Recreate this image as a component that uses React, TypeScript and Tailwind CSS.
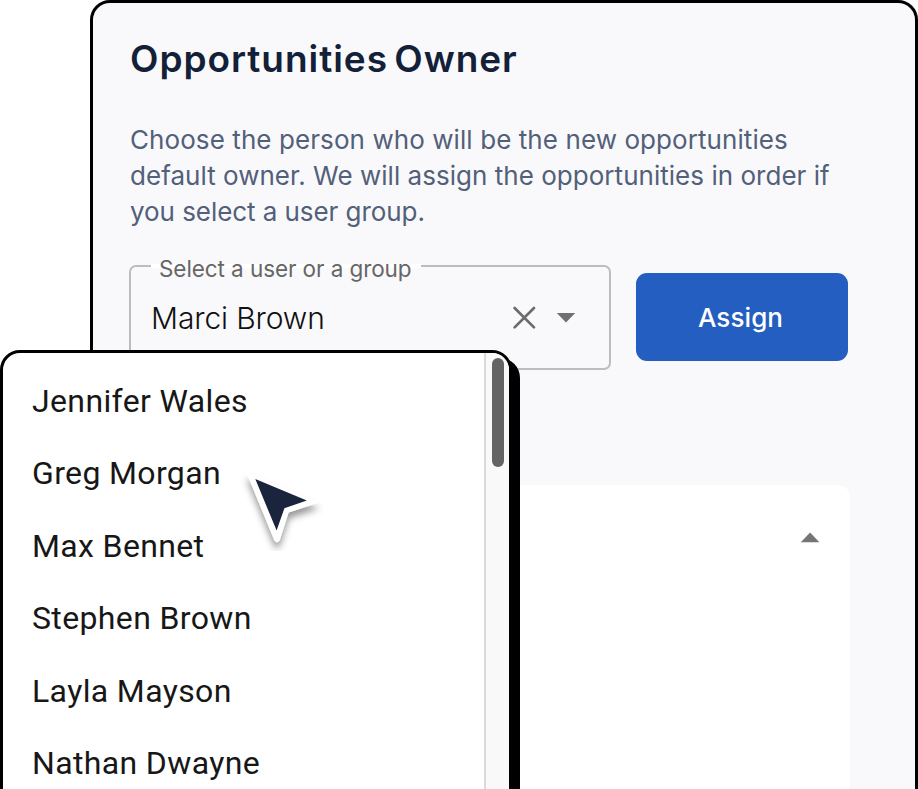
const users = [
  "Jennifer Wales",
  "Greg Morgan",
  "Max Bennet",
  "Stephen Brown",
  "Layla Mayson",
  "Nathan Dwayne",
];

function OwnerSelect() {
  return (
    <div className="relative flex h-[105px] w-[482px] items-center rounded-[7px] border-2 border-[#bdbdbf] pl-5 pr-[33px]">
      <span className="absolute -top-[3px] left-5 h-1 w-[270px] bg-white" />
      <span className="absolute -top-3 left-[28px] whitespace-nowrap text-[22.5px] leading-7 tracking-[-0.08px] text-[#666]">
        Select a user or a group
      </span>
      <span className="flex-1 text-[30px] font-light leading-10 tracking-[-0.13px] text-[#111]">
        Marci Brown
      </span>
      <svg width="24" height="24" viewBox="0 0 24 24" className="mr-5" fill="none" stroke="#6b6b6b" strokeWidth="2.7" strokeLinecap="round">
        <path d="M2.6 2 22 21.4M22 2 2.6 21.4" />
      </svg>
      <svg width="20" height="10" viewBox="0 0 20 10" fill="#707070">
        <path d="M.8 0h18.4L10 9.4z" />
      </svg>
    </div>
  );
}

function OwnerPanel() {
  return (
    <section className="ml-[90px] flex h-[840px] w-[828px] flex-col rounded-[20px] border-[3px] border-black bg-[#f9f9fc] pl-9 pr-[67px] pt-8">
      <h1 className="ml-px whitespace-nowrap text-[37px] font-semibold leading-[48px] tracking-[0.96px] [word-spacing:-4px] text-[#141f38]">
        Opportunities Owner
      </h1>
      <p className="ml-px mt-[39px] whitespace-nowrap text-[26px] leading-[35.75px] text-[#526079]">
        <span className="block tracking-[0.08px]">Choose the person who will be the new opportunities</span>
        <span className="block tracking-[0.03px]">default owner. We will assign the opportunities in order if</span>
        <span className="block tracking-[-0.06px]">you select a user group.</span>
      </p>
      <div className="mt-[35.75px] flex items-center justify-between">
        <OwnerSelect />
        <button className="mb-px h-[88px] w-[212px] rounded-[11px] bg-[#245ec1] pr-[3px] text-[26px] font-medium tracking-[0.1px] text-white">
          Assign
        </button>
      </div>
      <div className="-mr-0.5 mt-[115px] flex h-[360px] justify-end rounded-xl bg-white pr-[30px] pt-[47px]">
        <svg width="20" height="11" viewBox="0 0 20 11" fill="#757575">
          <path d="M.8 10.2h18.6L10.1.6z" />
        </svg>
      </div>
    </section>
  );
}

function UserMenu() {
  return (
    <div className="absolute left-0 top-[350px] flex h-[480px] w-[512px] overflow-hidden rounded-[20px] border-[3px] border-black bg-white">
      <ul className="flex-1 pl-[29px] pt-3 font-[Roboto,sans-serif] text-[32px] tracking-[0.36px] text-[#171717]">
        {users.map((name) => (
          <li key={name} className="h-[72.4px] leading-[72.4px]">
            {name}
          </li>
        ))}
      </ul>
      <div className="w-[25px] border-l-2 border-[#dadada] bg-[#f9f9f9] pl-1.5 pt-[5px]">
        <div className="h-[109px] w-3 rounded-full bg-[#646464]" />
      </div>
    </div>
  );
}

function Cursor() {
  return (
    <svg className="absolute left-[235px] top-[465px]" width="95" height="86" viewBox="235 465 95 86">
      <defs>
        <filter id="cursor-shadow" x="-30%" y="-30%" width="160%" height="160%">
          <feDropShadow dx="0" dy="6" stdDeviation="3.6" floodColor="#000" floodOpacity="0.4" />
        </filter>
      </defs>
      <path
        d="M246.4 472.2 319 502.4 288.6 512.4 279.8 540Q277.3 544.2 274.4 540.6Z"
        fill="#fff"
        filter="url(#cursor-shadow)"
      />
      <path d="M255.3 479 306.8 500.6 284.4 508.2 276.6 530.6Z" fill="#1a243c" />
    </svg>
  );
}

export default function App() {
  return (
    <main className="relative h-[789px] w-[918px] overflow-hidden bg-white font-[Inter,sans-serif]">
      <OwnerPanel />
      <div className="absolute left-2 top-[358px] h-[480px] w-[512px] rounded-[20px] bg-black" />
      <UserMenu />
      <Cursor />
    </main>
  );
}
